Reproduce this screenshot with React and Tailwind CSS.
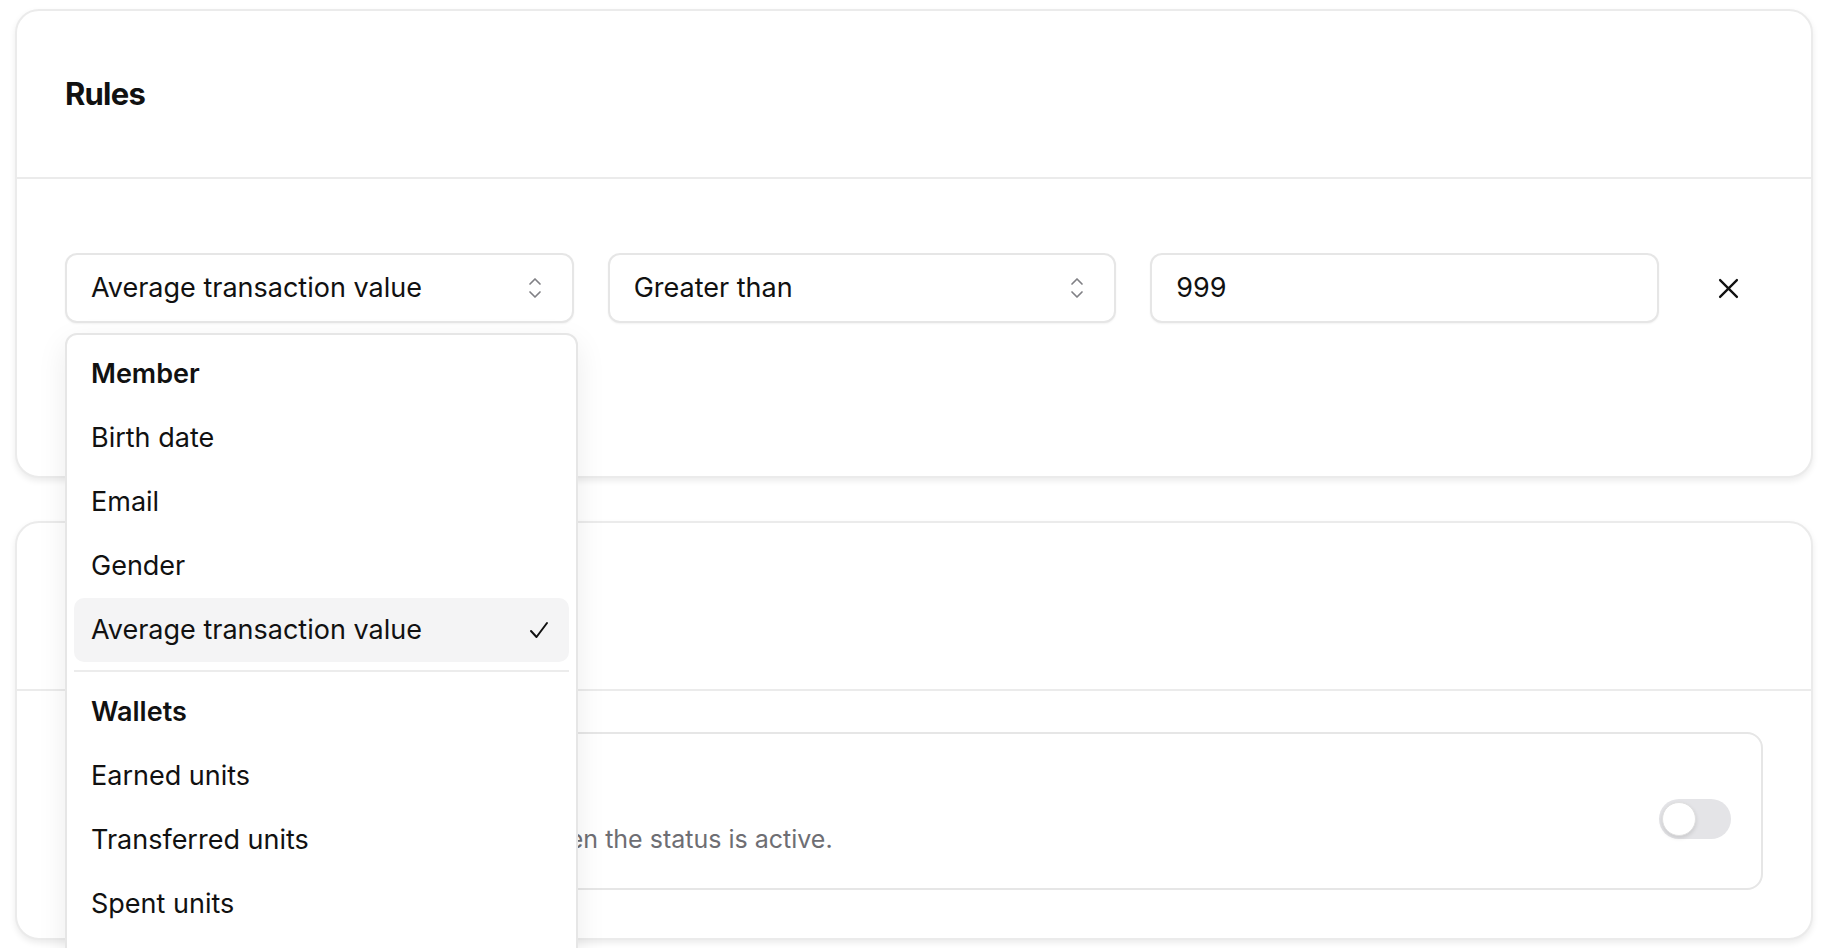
import { useState } from "react";

const groups = [
  {
    name: "Member",
    items: ["Birth date", "Email", "Gender", "Average transaction value"],
  },
  {
    name: "Wallets",
    items: ["Earned units", "Transferred units", "Spent units", "Points balance"],
  },
];

function Updown() {
  return (
    <svg width="14" height="24" viewBox="0 0 14 24" fill="none" stroke="#808085" strokeWidth="1.7" strokeLinecap="round" strokeLinejoin="round">
      <path d="M2 8l5-5 5 5" />
      <path d="M2 16l5 5 5-5" />
    </svg>
  );
}

function Field({ value, chevron, children }) {
  return (
    <div className="relative flex-1">
      <div className="flex h-[70px] items-center justify-between rounded-[12px] border-2 border-[#e6e6e6] bg-white pl-[24px] pr-[30px] shadow-[0_1px_2px_rgba(0,0,0,0.05)]">
        <span className="text-[27px] text-[#111]">{value}</span>
        {chevron && <Updown />}
      </div>
      {children}
    </div>
  );
}

function Menu() {
  return (
    <div className="absolute left-0 top-[80px] z-10 w-[513px] rounded-[12px] border-2 border-[#e6e6e6] bg-white p-[7px] shadow-[0_10px_30px_rgba(0,0,0,0.08)]">
      {groups.map((group, gi) => (
        <div key={group.name}>
          {gi > 0 && <div className="my-[8px] h-[2px] bg-[#ececec]" />}
          <div className="flex h-[64px] items-center px-[17px] text-[27px] font-semibold text-[#111]">
            {group.name}
          </div>
          {group.items.map((item) => {
            const selected = item === "Average transaction value";
            return (
              <div
                key={item}
                className={
                  "flex h-[64px] items-center justify-between rounded-[10px] pl-[17px] pr-[20px] text-[27px] text-[#111] " +
                  (selected ? "bg-[#f4f4f5]" : "")
                }
              >
                <span>{item}</span>
                {selected && (
                  <svg width="20" height="18" viewBox="0 0 20 18" fill="none" stroke="#111" strokeWidth="2" strokeLinecap="round" strokeLinejoin="round">
                    <path d="M2 10l5.5 6L18 2" />
                  </svg>
                )}
              </div>
            );
          })}
        </div>
      ))}
    </div>
  );
}

export default function App() {
  const [on] = useState(false);
  return (
    <div
      className="min-h-screen bg-white pl-[15px] pr-[13px] pt-[9px]"
      style={{ fontFamily: "Inter, 'Noto Sans', sans-serif" }}
    >
      {/* Rules card */}
      <div className="rounded-[24px] border-2 border-[#ebebeb] bg-white shadow-[0_3px_6px_rgba(0,0,0,0.08)]">
        <div className="flex h-[168px] items-center border-b-2 border-[#ebebeb] px-[48px]">
          <h2 className="text-[31px] font-bold tracking-tight text-[#111]">Rules</h2>
        </div>
        <div className="px-[48px] pb-[153px] pt-[74px]">
          <div className="flex items-center gap-[34px]">
            <Field value="Average transaction value" chevron>
              <Menu />
            </Field>
            <Field value="Greater than" chevron />
            <Field value="999" />
            <button className="flex h-[70px] w-[70px] items-center justify-center">
              <svg width="21" height="21" viewBox="0 0 20 20" fill="none" stroke="#111" strokeWidth="2.2" strokeLinecap="round">
                <path d="M2 2l16 16M18 2L2 18" />
              </svg>
            </button>
          </div>
        </div>
      </div>

      {/* Status card */}
      <div className="mt-[43px] rounded-[24px] border-2 border-[#ebebeb] bg-white shadow-[0_3px_6px_rgba(0,0,0,0.08)]">
        <div className="flex h-[168px] items-center border-b-2 border-[#ebebeb] px-[48px]">
          <h2 className="text-[31px] font-bold tracking-tight text-[#111]">Status</h2>
        </div>
        <div className="px-[48px] pb-[48px] pt-[41px]">
          <div className="flex h-[158px] items-center justify-between rounded-[16px] border-2 border-[#e6e6e6] pl-[24px] pr-[30px]">
            <div className="flex flex-col gap-[8px] pt-[10px]">
              <span className="text-[26px] font-medium text-[#111]">Active</span>
              <span className="text-[25px] text-[#6e6e73]">
                Rewards are issued to members only when the status is active.
              </span>
            </div>
            <div className="mt-[16px] flex h-[40px] w-[72px] items-center rounded-full bg-[#e4e4e7] px-[3px]">
              <div
                className={
                  "h-[34px] w-[34px] rounded-full border border-[#e0e0e0] bg-white shadow-[0_2px_4px_rgba(0,0,0,0.12)] " +
                  (on ? "ml-auto" : "")
                }
              />
            </div>
          </div>
        </div>
      </div>
    </div>
  );
}
